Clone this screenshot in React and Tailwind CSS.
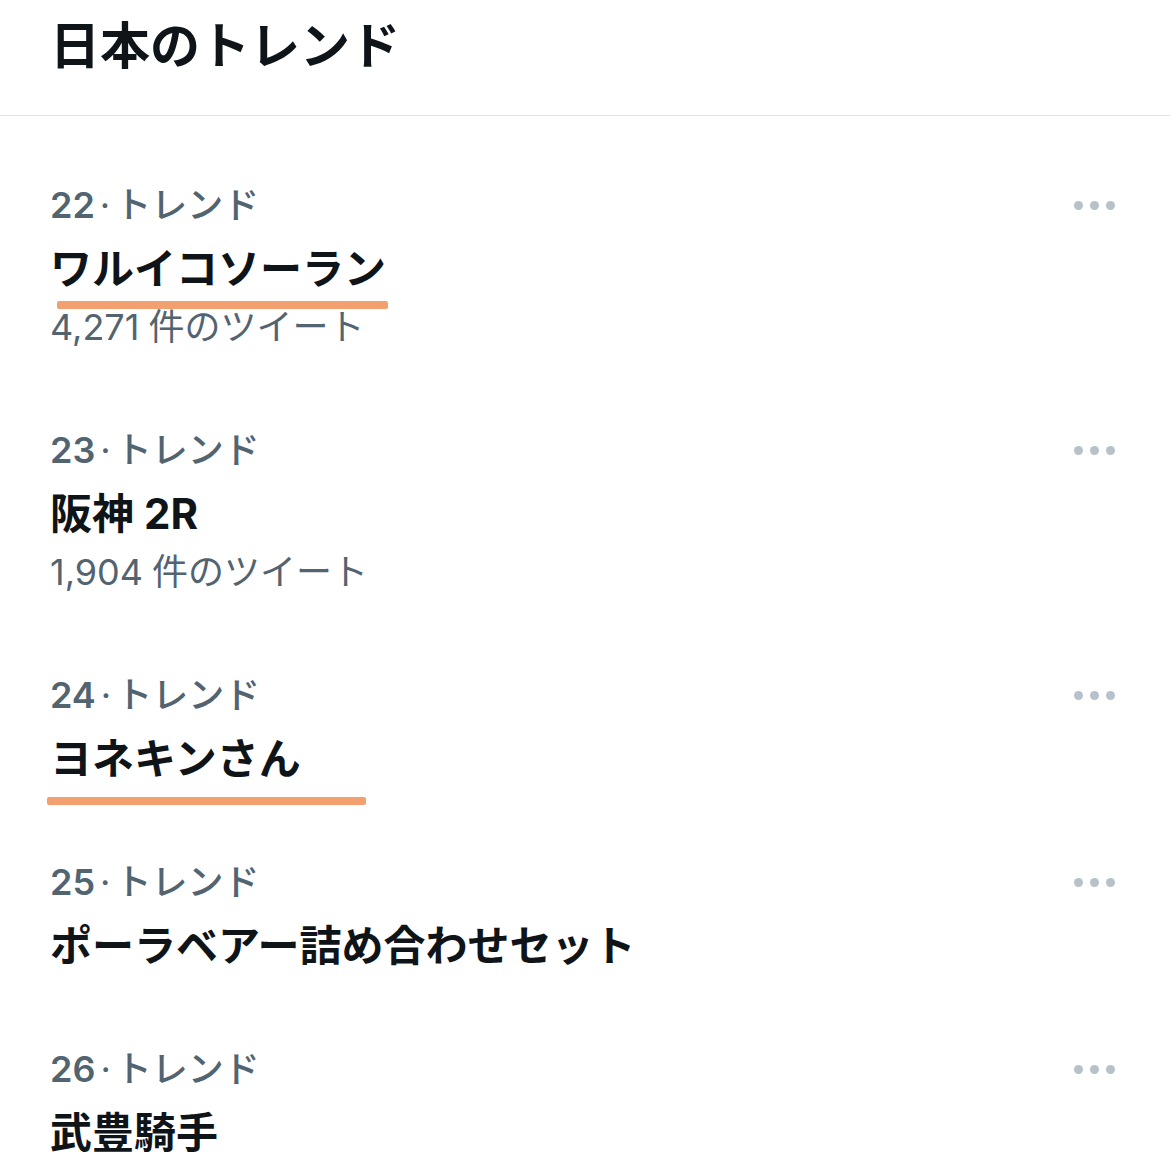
import React from "react";

const items = [
  { rank: 22, title: "ワルイコソーラン", count: "4,271", mark: { top: "top-[65px]", left: "left-[7px]", w: "w-[331px]" } },
  { rank: 23, title: "阪神 2R", count: "1,904" },
  { rank: 24, title: "ヨネキンさん", mark: { top: "top-[71px]", left: "left-[-3px]", w: "w-[319px]" } },
  { rank: 25, title: "ポーラベアー詰め合わせセット" },
  { rank: 26, title: "武豊騎手" },
];

function Dots() {
  return (
    <div className="flex items-center gap-[7px]">
      <span className="block h-[9px] w-[9px] rounded-full bg-[#b6c1cb]" />
      <span className="block h-[9px] w-[9px] rounded-full bg-[#b6c1cb]" />
      <span className="block h-[9px] w-[9px] rounded-full bg-[#b6c1cb]" />
    </div>
  );
}

export default function App() {
  return (
    <div className="w-[1170px] h-[1170px] overflow-hidden bg-white font-['Inter','Noto_Sans_CJK_JP',sans-serif]">
      <div className="box-border h-[116px] border-b border-[#dfe3e6] pl-[50px] pt-[17px]">
        <h1 className="text-[50px] leading-[58px] font-bold text-[#0f1419]">日本のトレンド</h1>
      </div>
      <div className="pt-[28px]">
        {items.map((it) => (
          <div key={it.rank} className="pl-[50px] pr-[55px] pt-[31px] pb-[34px]">
            <div className="flex items-center justify-between h-[61px]">
              <div className="text-[36px] leading-[61px] font-medium text-[#536471]">
                <span className="font-semibold">{it.rank}</span>
                <span className="mx-[5px] font-normal">·</span>トレンド
              </div>
              <Dots />
            </div>
            <div className="relative h-[61px]">
              <div className="pt-[2px] text-[42px] leading-[61px] font-bold text-[#0f1419]">{it.title}</div>
              {it.mark && (
                <span className={`absolute ${it.mark.top} ${it.mark.left} ${it.mark.w} h-[8px] rounded-[2px] bg-[#f2a070]`} />
              )}
            </div>
            {it.count && (
              <div className="h-[58px] text-[36px] leading-[61px] font-normal text-[#536471]">
                {it.count}<span className="ml-[9px]">件のツイート</span>
              </div>
            )}
          </div>
        ))}
      </div>
    </div>
  );
}
